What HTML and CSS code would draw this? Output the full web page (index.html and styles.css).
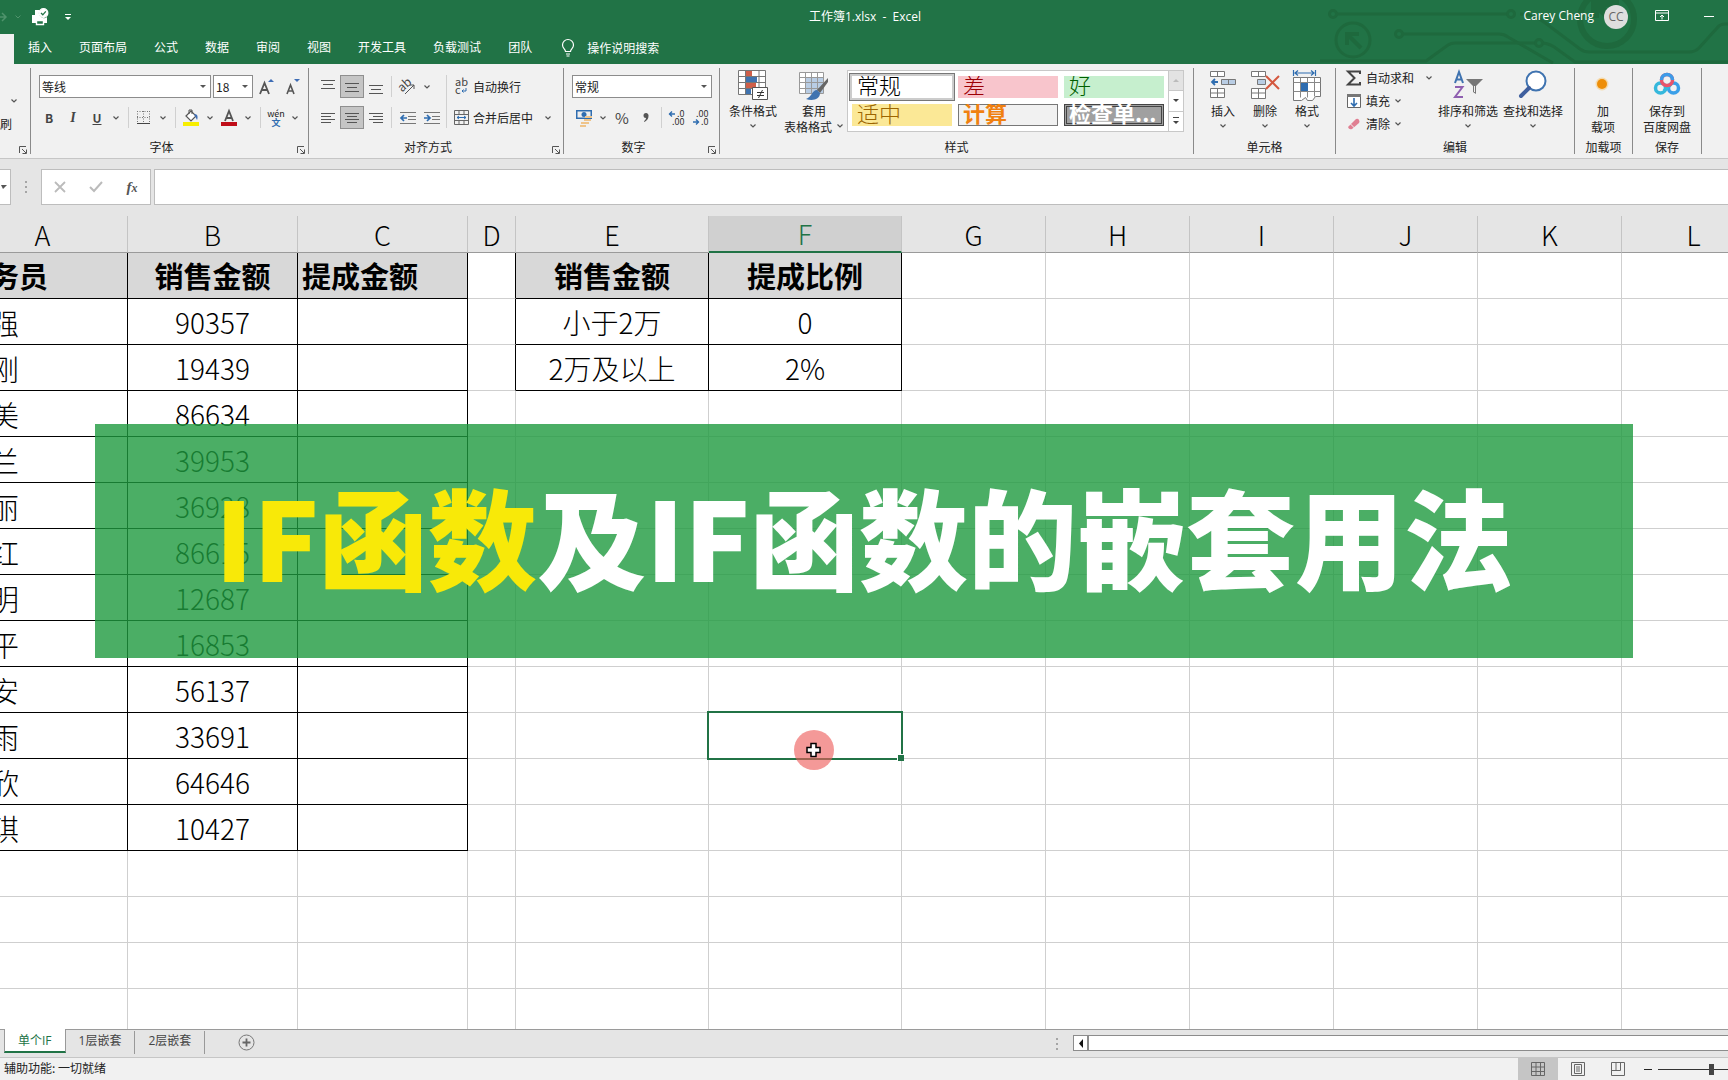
FILE: index.html
```html
<!DOCTYPE html>
<html lang="zh-CN">
<head>
<meta charset="utf-8">
<title>工作簿1.xlsx - Excel</title>
<link rel="stylesheet" href="styles.css">
</head>
<body>
<svg class="defs" aria-hidden="true">
  <symbol id="chev" viewBox="0 0 8 8"><path d="M1.500 2.500l2.500 2.500 2.500-2.500" fill="none" stroke="#555" stroke-width="1.200"/></symbol>
  <symbol id="launch" viewBox="0 0 8 8"><path d="M.5 7V.5H7M3 3l4 4M7.500 3.500v4h-4" fill="none" stroke="#555"/></symbol>
</svg>

<header class="top">
  <svg class="circuit" viewBox="0 0 408 64" aria-hidden="true">
    <g fill="none" stroke="#1e693d" stroke-width="3">
      <circle cx="13" cy="14" r="3.500"/><path d="M17 14h171"/><circle cx="191" cy="14" r="3.500"/>
      <circle cx="33" cy="40" r="17"/><path d="M41 48L28 35M27 45V34h12" stroke-width="4"/>
      <circle cx="79" cy="34" r="3.500"/><path d="M83 34h96q5 0 9 3l45 26"/>
      <path d="M-2 61h108l22-16q3-2 7-2h80"/><circle cx="219" cy="43" r="3.500"/><path d="M223 43q8 1 14 6l18 13h153"/>
      <path d="M200 14q14 0 24 8l36 27q4 3 9 3h100q6 0 10-4l18-20q3-4 8-4h10"/>
      <circle cx="287" cy="19" r="27" stroke-width="6"/><path d="M275 18V3h24M277 5l14 13" stroke-width="8"/>
    </g>
  </svg>
  <div class="titlebar">
    <div class="qat">
      <button class="ghost w7" aria-label="重做"><svg width="7" height="12"><path d="M0 6h6M2 2l4 4-4 4" fill="none" stroke="#4f936c" stroke-width="1.500"/></svg></button>
      <button class="ghost w22" aria-label="重做选项"><svg width="8" height="8"><path d="M1.500 2.500L4 5l2.500-2.500" fill="none" stroke="#4f936c"/></svg></button>
      <button class="ghost w24" aria-label="打印预览"><svg width="18" height="18" viewBox="0 0 18 18"><path d="M1 7h3V2h5a5 5 0 0 0 7 7v6h-3v-3H5v3H1z" fill="#fff"/><path d="M5.500 12.500h7v4h-7z" fill="#217346" stroke="#fff" stroke-width="1.400"/><circle cx="12.500" cy="5" r="4.300" fill="#fff" stroke="#fff" stroke-width="1.300"/><path d="M10 5l1.800 1.800 3-3.500" fill="none" stroke="#217346" stroke-width="1.300"/></svg></button>
      <button class="ghost w32" aria-label="自定义快速访问工具栏"><svg width="8" height="8"><path d="M1 1.500h6" stroke="#fff"/><path d="M1 4h6L4 7z" fill="#fff"/></svg></button>
    </div>
    <h1 class="doc">工作簿1.xlsx&nbsp; -&nbsp; Excel</h1>
    <div class="account">
      <span class="user">Carey Cheng</span>
      <span class="avatar">CC</span>
      <button class="ghost w14" aria-label="功能区显示选项"><svg width="14" height="12"><path d="M.5.5h13v10H.5zM.5 3h13M7 9.500V5M5 7l2-2 2 2" fill="none" stroke="#fff"/></svg></button>
      <button class="ghost w12" aria-label="最小化"><svg width="12" height="3"><path d="M1 1.500h10" stroke="#fff"/></svg></button>
    </div>
  </div>
  <nav class="tabs">
    <a class="tab current" href="#home" aria-label="开始"></a>
    <a class="tab" href="#insert">插入</a><a class="tab" href="#layout">页面布局</a><a class="tab" href="#formula">公式</a><a class="tab" href="#data">数据</a><a class="tab" href="#review">审阅</a><a class="tab" href="#view">视图</a><a class="tab" href="#dev">开发工具</a><a class="tab" href="#load">负载测试</a><a class="tab" href="#team">团队</a>
    <a class="tab tell" href="#tell"><svg width="14" height="18"><path d="M4.500 12.500c0-2.500-3-3-3-6.500a5.500 5.500 0 0 1 11 0c0 3.500-3 4-3 6.500zM5 15h4M5.500 17h3" fill="none" stroke="#fff" stroke-width="1.200"/></svg>操作说明搜索</a>
  </nav>
</header>

<section class="ribbon" aria-label="功能区">
  <div class="group g-clip">
    <div class="clip-body">
      <button class="chevbtn" aria-label="复制选项"><svg class="chev"><use href="#chev"/></svg></button>
      <button class="text-btn">刷</button>
    </div>
    <svg class="launch"><use href="#launch"/></svg>
  </div>

  <div class="group g-font">
    <div class="rows">
      <div class="row gap2">
        <span class="combo c172"><select aria-label="字体"><option>等线</option></select></span>
        <span class="combo c40"><select aria-label="字号"><option>18</option></select></span>
        <button class="b24" aria-label="增大字号"><svg width="20" height="20"><path d="M3 17L7.500 6l4.500 11M5 13h5" fill="none" stroke="#555" stroke-width="1.800"/><path d="M11 5h6l-3-3z" fill="#3e6db5"/></svg></button>
        <button class="b24" aria-label="减小字号"><svg width="20" height="20"><path d="M4 17L7.500 8l3.500 9M5.500 14h4" fill="none" stroke="#555" stroke-width="1.600"/><path d="M11 2h6l-3 3z" fill="#3e6db5"/></svg></button>
      </div>
      <div class="row">
        <button class="b24 bold">B</button><button class="b24 ital">I</button><button class="b24 under">U</button><button class="chevbtn" aria-label="下划线选项"><svg class="chev"><use href="#chev"/></svg></button>
        <i class="sep"></i>
        <button class="b24" aria-label="边框"><svg width="14" height="14"><path d="M.5 0v12M6.500 0v12M12.500 0v12M0 .5h13M0 6.500h13" stroke="#777" stroke-dasharray="1 1.500"/><path d="M0 12.500h13" stroke="#444"/></svg></button><button class="chevbtn" aria-label="边框选项"><svg class="chev"><use href="#chev"/></svg></button>
        <i class="sep"></i>
        <button class="b24" aria-label="填充颜色"><svg width="18" height="18"><path d="M4 7l5-5 5 5-5 5z" fill="#fff" stroke="#555" stroke-width="1.200"/><path d="M7 5V1h3v4" fill="none" stroke="#555"/><path d="M12 5c4 0 4 3 3 6l-2-4z" fill="#3e6db5"/><path d="M1 13h16v4H1z" fill="#f7ee00"/></svg></button><button class="chevbtn" aria-label="填充颜色选项"><svg class="chev"><use href="#chev"/></svg></button>
        <button class="b24" aria-label="字体颜色"><svg width="18" height="18"><path d="M5 12L9 2l4 10M6.500 9h5" fill="none" stroke="#555" stroke-width="1.800"/><path d="M1 13h16v4H1z" fill="#c00d18"/></svg></button><button class="chevbtn" aria-label="字体颜色选项"><svg class="chev"><use href="#chev"/></svg></button>
        <i class="sep"></i>
        <button class="b24 wen"><span>wén</span><span class="zh">文</span></button><button class="chevbtn" aria-label="拼音选项"><svg class="chev"><use href="#chev"/></svg></button>
      </div>
    </div>
    <div class="caption side">字体</div>
    <svg class="launch"><use href="#launch"/></svg>
  </div>

  <div class="group g-align">
    <div class="split">
      <div class="rows">
        <div class="row">
          <button class="b24" aria-label="顶端对齐"><svg width="14" height="14"><path d="M0 .5h14M2 4.500h10M0 8.500h14" stroke="#555"/></svg></button><button class="b24 on" aria-label="垂直居中"><svg width="14" height="14"><path d="M0 3.500h14M2 7.500h10M0 11.500h14" stroke="#555"/></svg></button><button class="b24" aria-label="底端对齐"><svg width="14" height="14"><path d="M0 5.500h14M2 9.500h10M0 13.500h14" stroke="#555"/></svg></button>
          <i class="sep s1"></i>
          <button class="b24" aria-label="方向"><svg width="18" height="18"><text x="0" y="11" transform="rotate(-42 6 9)" font-size="12" fill="#444">ab</text><path d="M6 16L15 7M11 7h4v4" fill="none" stroke="#555"/></svg></button><button class="chevbtn" aria-label="方向选项"><svg class="chev"><use href="#chev"/></svg></button>
        </div>
        <div class="row">
          <button class="b24" aria-label="左对齐"><svg width="14" height="14"><path d="M0 2.500h14M0 5.500h10M0 8.500h14M0 11.500h10" stroke="#555"/></svg></button><button class="b24 on" aria-label="居中"><svg width="14" height="14"><path d="M0 2.500h14M2 5.500h10M0 8.500h14M2 11.500h10" stroke="#555"/></svg></button><button class="b24" aria-label="右对齐"><svg width="14" height="14"><path d="M0 2.500h14M4 5.500h10M0 8.500h14M4 11.500h10" stroke="#555"/></svg></button>
          <i class="sep s1"></i>
          <button class="b24" aria-label="减少缩进"><svg width="16" height="14"><path d="M0 1.500h16M8 5.500h8M8 8.500h8M0 12.500h16" stroke="#777"/><path d="M7 7H1M4 4L1 7l3 3" fill="none" stroke="#2f6db0" stroke-width="1.700"/></svg></button><button class="b24" aria-label="增加缩进"><svg width="16" height="14"><path d="M0 1.500h16M8 5.500h8M8 8.500h8M0 12.500h16" stroke="#777"/><path d="M0 7h6M3 4l3 3-3 3" fill="none" stroke="#2f6db0" stroke-width="1.700"/></svg></button>
        </div>
      </div>
      <i class="sep tall"></i>
      <div class="rows">
        <button class="row label-btn"><svg width="15" height="16"><text x="1" y="7" font-size="11" fill="#444">ab</text><text x="1" y="15" font-size="11" fill="#444">c</text><path d="M12 9v3H8M9.500 10.500L8 12l1.500 1.500" fill="none" stroke="#2f6db0"/></svg>自动换行</button>
        <button class="row label-btn"><svg width="15" height="15"><path d="M.5.5h14v14H.5zM.5 4.500h14M.5 10.500h14M5 .5v4M10 .5v4M5 10.500v4M10 10.500v4" fill="none" stroke="#666"/><path d="M3 7.500h9M5 6L3 7.500 5 9M10 6l2 1.500L10 9" fill="none" stroke="#2f6db0"/></svg>合并后居中<svg class="chev ml"><use href="#chev"/></svg></button>
      </div>
    </div>
    <div class="caption side">对齐方式</div>
    <svg class="launch"><use href="#launch"/></svg>
  </div>

  <div class="group g-num">
    <div class="rows">
      <div class="row"><span class="combo c140"><select aria-label="数字格式"><option>常规</option></select></span></div>
      <div class="row">
        <button class="b24" aria-label="会计数字格式"><svg width="18" height="18"><path d="M1 1h16v9H1z" fill="#2f6db0"/><path d="M2.500 2.500h13v6h-13z" fill="#eee"/><circle cx="9" cy="5.500" r="2.500" fill="#2f6db0"/><path d="M10 8h7M9 11h7M6 14h8M5 17h6" stroke="#efc48a" stroke-width="2"/></svg></button><button class="chevbtn" aria-label="会计格式选项"><svg class="chev"><use href="#chev"/></svg></button>
        <button class="b24 pct">%</button><button class="b24" aria-label="千位分隔样式"><svg width="6" height="10"><path d="M3 0a2.500 2.500 0 0 1 2.500 3c0 3-1.500 4.500-4 6l-.5-.8C2.500 7 3 6 3 5A2.500 2.500 0 0 1 3 0z" fill="#555"/></svg></button>
        <i class="sep s2"></i>
        <button class="b24" aria-label="增加小数位数"><svg width="18" height="16"><text x="9" y="7" font-size="9" fill="#333">.0</text><text x="4" y="15" font-size="9" fill="#333">.00</text><path d="M7 4H1M4 1.500L1.500 4 4 6.500" fill="none" stroke="#2f6db0" stroke-width="1.400"/></svg></button><button class="b24" aria-label="减少小数位数"><svg width="18" height="16"><text x="4" y="7" font-size="9" fill="#333">.00</text><text x="9" y="15" font-size="9" fill="#333">.0</text><path d="M1 12h6M4 9.500L6.500 12 4 14.500" fill="none" stroke="#2f6db0" stroke-width="1.400"/></svg></button>
      </div>
    </div>
    <div class="caption side">数字</div>
    <svg class="launch"><use href="#launch"/></svg>
  </div>

  <div class="group g-style">
    <div class="bigs">
      <button class="big w62"><svg width="30" height="32"><path d="M.5.5h27v24H.5z" fill="#fff"/><path d="M8 0h6v6H8zM8 13h10v6H8z" fill="#cf5f4a"/><path d="M8 6h11v6H8zM8 19h5v5H8z" fill="#3f73b0"/><path d="M.5.5h27v24H.5zM7.500.5v24M21 .5v24M.5 6.500h27M.5 12.500h27M.5 18.500h27" fill="none" stroke="#777"/><path d="M14.500 17.500h15v12h-15z" fill="#fff" stroke="#555"/><path d="M19 22.500h7M19 25.500h7M24.500 20l-4 8" stroke="#333"/></svg><span>条件格式</span><svg class="chev"><use href="#chev"/></svg></button>
      <button class="big w60"><svg width="32" height="32"><path d="M1.500 2.500h24v21h-24z" fill="#fff"/><path d="M8 8h17v16H8z" fill="#b9cde4"/><path d="M1.500 2.500h24v21h-24zM7.500 2.500v21M13.500 2.500v21M19.500 2.500v21M1.500 7.500h24M1.500 12.500h24M1.500 18.500h24" fill="none" stroke="#999"/><path d="M30 8L19 20l3 3 8-11z" fill="#666"/><path d="M19 20c-5 0-5 7-11 9 6 2 14 1 14-6z" fill="#3f73b0"/></svg><span>套用</span><span class="inline">表格格式<svg class="chev"><use href="#chev"/></svg></span></button>
    </div>
    <div class="gallery">
      <div class="swatches">
        <button class="sw normal">常规</button><button class="sw bad">差</button><button class="sw good">好</button>
        <button class="sw neutral">适中</button><button class="sw calc">计算</button><button class="sw check">检查单...</button>
      </div>
      <div class="scroller">
        <button class="off" aria-label="上一行"><svg width="8" height="5"><path d="M1 4h6L4 1z" fill="#bbb"/></svg></button>
        <button aria-label="下一行"><svg width="8" height="5"><path d="M1 1h6L4 4z" fill="#444"/></svg></button>
        <button aria-label="其他"><svg width="8" height="8"><path d="M1 .5h6" stroke="#444"/><path d="M1 4h6L4 7z" fill="#444"/></svg></button>
      </div>
    </div>
    <div class="caption">样式</div>
  </div>

  <div class="group g-cells">
    <div class="bigs">
      <button class="big w42"><svg width="28" height="32"><path d="M1.500 1.500h14v5h-14zM8.500 1.500v5M1.500 18.500h14v9h-14zM8.500 18.500v9M1.500 23h14" fill="#fff" stroke="#777"/><path d="M12.500 9.500h14v5h-14zM19.500 9.500v5" fill="#b9cde4" stroke="#777"/><path d="M9 12H3M6 9l-3 3 3 3" fill="none" stroke="#2f6db0" stroke-width="1.800"/></svg><span>插入</span><svg class="chev"><use href="#chev"/></svg></button>
      <button class="big w42"><svg width="30" height="32"><path d="M1.500 1.500h14v5h-14zM8.500 1.500v5M1.500 18.500h14v10h-14zM8.500 18.500v10M1.500 23h14" fill="#fff" stroke="#777"/><path d="M7.500 9.500h8v5h-8z" fill="#b9cde4" stroke="#777"/><path d="M16 6l13 13M29 6L16 19" stroke="#d4583f" stroke-width="2"/></svg><span>删除</span><svg class="chev"><use href="#chev"/></svg></button>
      <button class="big w42"><svg width="28" height="32"><path d="M.5 0v6M22.500 0v6M2 3h19M5 .5L2 3l3 2.500M18 .5L21 3l-3 2.500" fill="none" stroke="#2f6db0" stroke-width="1.200"/><path d="M.5 7.500h27v19h-5l-3 4h-5l-2-3-4 3h-8z" fill="#fff" stroke="#777"/><path d="M7.500 7.500v20M14.500 7.500v20M21.500 7.500v19M.5 12.500h27M.5 21.500h27" stroke="#888"/><path d="M8 13h7v8H8z" fill="#2f6db0"/></svg><span>格式</span><svg class="chev"><use href="#chev"/></svg></button>
    </div>
    <div class="caption">单元格</div>
  </div>

  <div class="group g-edit">
    <div class="edits">
      <button class="edit"><svg width="16" height="16"><path d="M14 4V1.500H2L8.500 8 2 14.500h12V12" fill="none" stroke="#444" stroke-width="2"/></svg>自动求和<svg class="chev ml"><use href="#chev"/></svg></button>
      <button class="edit"><svg width="16" height="16"><path d="M1.500 1.500h13v13h-13z" fill="#fff" stroke="#666"/><path d="M1 1h14v3H1z" fill="#777"/><path d="M8 5v8M5 10l3 3 3-3" fill="none" stroke="#2f6db0" stroke-width="1.600"/></svg>填充<svg class="chev"><use href="#chev"/></svg></button>
      <button class="edit"><svg width="16" height="16"><path d="M2 11L10 3q2-1 3 1t0 3L6 13q-3 1-4-2z" fill="#e07f92"/><path d="M4.500 8l4 4" stroke="#f1f1f1"/></svg>清除<svg class="chev"><use href="#chev"/></svg></button>
    </div>
    <div class="bigs">
      <button class="big w66"><svg width="32" height="32"><path d="M3 13L7 2l4 11M4.500 9.500h5" fill="none" stroke="#3f73b0" stroke-width="2"/><path d="M3 17h7.500L3 27h8" fill="none" stroke="#8f5fb0" stroke-width="2"/><path d="M14 9h17l-7 7v8l-3-2v-6z" fill="#777"/><path d="M22 16h1v6h-1z" fill="#f1f1f1"/></svg><span>排序和筛选</span><svg class="chev"><use href="#chev"/></svg></button>
      <button class="big w64"><svg width="30" height="32"><circle cx="18" cy="11" r="9.500" fill="#fff" stroke="#3f73b0" stroke-width="2"/><path d="M11 18L3 26" stroke="#3f5f9e" stroke-width="4" stroke-linecap="round"/></svg><span>查找和选择</span><svg class="chev"><use href="#chev"/></svg></button>
    </div>
    <div class="caption">编辑</div>
  </div>

  <div class="group g-addin">
    <div class="bigs"><button class="big w56"><svg width="28" height="32"><circle cx="13" cy="14" r="6.500" fill="#f9c56b" opacity=".5"/><circle cx="13" cy="14" r="5" fill="#ee8e08"/></svg><span>加</span><span>载项</span></button></div>
    <div class="caption">加载项</div>
  </div>
  <div class="group g-save">
    <div class="bigs"><button class="big w68"><svg width="28" height="32"><g fill="none" stroke-width="3.500"><circle cx="7.500" cy="18" r="5" stroke="#35b8dc"/><circle cx="20.500" cy="18" r="5" stroke="#3a9fe8"/><path d="M11 21l7-7" stroke="#35b8dc"/><circle cx="14" cy="10" r="5.500" stroke="#e9546b"/><path d="M8.500 10a5.500 5.500 0 0 1 11 0" stroke="#3d9be8"/></g></svg><span>保存到</span><span>百度网盘</span></button></div>
    <div class="caption">保存</div>
  </div>
</section>

<div class="formula">
  <button class="namebox" aria-label="名称框"><svg width="8" height="5"><path d="M0 0h6L2 4z" fill="#555"/></svg></button>
  <span class="grip"></span>
  <div class="fx">
    <button aria-label="取消"><svg width="12" height="12"><path d="M1 1l10 10M11 1L1 11" stroke="#bbb" stroke-width="1.800"/></svg></button>
    <button aria-label="输入"><svg width="14" height="12"><path d="M1 6l4 4 8-9" fill="none" stroke="#bbb" stroke-width="2"/></svg></button>
    <button class="fxi">f<small>x</small></button>
  </div>
  <input class="finput" aria-label="编辑栏">
</div>

<main class="sheet">
  <table class="grid">
    <colgroup><col class="k170"><col class="k170"><col class="k170"><col class="k48"><col class="k193"><col class="k193"><col class="k144"><col class="k144"><col class="k144"><col class="k144"><col class="k144"><col class="k144"></colgroup>
    <thead><tr><th>A</th><th>B</th><th>C</th><th>D</th><th>E</th><th class="sel">F</th><th>G</th><th>H</th><th>I</th><th>J</th><th>K</th><th>L</th></tr></thead>
    <tbody>
      <tr><td class="h n">务员</td><td class="h">销售金额</td><td class="h l">提成金额</td><td class="r"></td><td class="h">销售金额</td><td class="h">提成比例</td><td></td><td></td><td></td><td></td><td></td><td></td></tr>
      <tr><td class="d n">强</td><td class="d">90357</td><td class="d"></td><td class="r"></td><td class="d">小于2万</td><td class="d">0</td><td></td><td></td><td></td><td></td><td></td><td></td></tr>
      <tr><td class="d n">刚</td><td class="d">19439</td><td class="d"></td><td class="r"></td><td class="d">2万及以上</td><td class="d">2%</td><td></td><td></td><td></td><td></td><td></td><td></td></tr>
      <tr><td class="d n">美</td><td class="d">86634</td><td class="d"></td><td></td><td></td><td></td><td></td><td></td><td></td><td></td><td></td><td></td></tr>
      <tr><td class="d n">兰</td><td class="d">39953</td><td class="d"></td><td></td><td></td><td></td><td></td><td></td><td></td><td></td><td></td><td></td></tr>
      <tr><td class="d n">丽</td><td class="d">36928</td><td class="d"></td><td></td><td></td><td></td><td></td><td></td><td></td><td></td><td></td><td></td></tr>
      <tr><td class="d n">红</td><td class="d">86615</td><td class="d"></td><td></td><td></td><td></td><td></td><td></td><td></td><td></td><td></td><td></td></tr>
      <tr><td class="d n">明</td><td class="d">12687</td><td class="d"></td><td></td><td></td><td></td><td></td><td></td><td></td><td></td><td></td><td></td></tr>
      <tr><td class="d n">平</td><td class="d">16853</td><td class="d"></td><td></td><td></td><td></td><td></td><td></td><td></td><td></td><td></td><td></td></tr>
      <tr><td class="d n">安</td><td class="d">56137</td><td class="d"></td><td></td><td></td><td></td><td></td><td></td><td></td><td></td><td></td><td></td></tr>
      <tr><td class="d n">雨</td><td class="d">33691</td><td class="d"></td><td></td><td></td><td class="active"><span class="halo"><svg width="16" height="16"><path d="M5 1.500h5v4h4v5h-4v4H5v-4H1v-5h4z" fill="#fff" stroke="#000" stroke-width="1.500"/></svg></span></td><td></td><td></td><td></td><td></td><td></td><td></td></tr>
      <tr><td class="d n">欣</td><td class="d">64646</td><td class="d"></td><td></td><td></td><td></td><td></td><td></td><td></td><td></td><td></td><td></td></tr>
      <tr><td class="d n">琪</td><td class="d">10427</td><td class="d"></td><td></td><td></td><td></td><td></td><td></td><td></td><td></td><td></td><td></td></tr>
      <tr><td></td><td></td><td></td><td></td><td></td><td></td><td></td><td></td><td></td><td></td><td></td><td></td></tr>
      <tr><td></td><td></td><td></td><td></td><td></td><td></td><td></td><td></td><td></td><td></td><td></td><td></td></tr>
      <tr><td></td><td></td><td></td><td></td><td></td><td></td><td></td><td></td><td></td><td></td><td></td><td></td></tr>
      <tr><td></td><td></td><td></td><td></td><td></td><td></td><td></td><td></td><td></td><td></td><td></td><td></td></tr>
    </tbody>
  </table>
  <div class="banner"><p><em>IF函数</em>及IF函数的嵌套用法</p></div>
</main>

<div class="sheetbar">
  <div class="sheettabs">
    <a class="stab now" href="#s1">单个IF</a><a class="stab" href="#s2">1层嵌套</a><a class="stab" href="#s3">2层嵌套</a>
    <button class="add" aria-label="新工作表"><svg width="17" height="17"><circle cx="8.500" cy="8.500" r="7.500" fill="none" stroke="#777"/><path d="M8.500 4.500v8M4.500 8.500h8" stroke="#666" stroke-width="1.800"/></svg></button>
  </div>
  <span class="grip small"></span>
  <div class="hscroll"><button aria-label="向左滚动"><svg width="6" height="9"><path d="M5 0v9L1 4.500z" fill="#111"/></svg></button></div>
</div>

<footer class="status">
  <span class="access">辅助功能: 一切就绪</span>
  <div class="views">
    <button class="on" aria-label="普通"><svg width="14" height="14"><path d="M.5.500h13v13H.5zM5 .5v13M9.500 .5v13M.5 5h13M.5 9.500h13" fill="none" stroke="#666"/></svg></button>
    <button aria-label="页面布局"><svg width="14" height="14"><path d="M.5.5h13v13H.5zM3.500 2.500h7v9h-7zM5 5h4M5 7h4M5 9h4" fill="none" stroke="#666"/></svg></button>
    <button aria-label="分页预览"><svg width="14" height="14"><path d="M.5.5h13v13H.5zM.5 8.500h9v-8M5 .5v8" fill="none" stroke="#666"/></svg></button>
    <button class="minus" aria-label="缩小"><svg width="8" height="1"><path d="M0 .5h8" stroke="#222"/></svg></button>
    <input class="zoom" type="range" min="10" max="400" value="205" aria-label="缩放">
  </div>
</footer>
</body>
</html>
```
FILE: styles.css
```css
* { box-sizing: border-box; }
body {
  margin: 0;
  height: 100vh;
  display: flex;
  flex-direction: column;
  overflow: hidden;
  background: #e5e5e5;
  color: #222;
  font: 12px/16px "Noto Sans CJK SC", sans-serif;
}
button, select, input { font: inherit; color: inherit; }
button { border: 0; padding: 0; background: none; display: flex; align-items: center; justify-content: center; flex: none; }
a { color: inherit; text-decoration: none; }
svg { display: block; flex: none; overflow: visible; }
.defs { width: 0; height: 0; position: absolute; }
.chev { width: 8px; height: 8px; }

/* title bar and tabs */
.top { position: relative; background: #217346; color: #fff; flex: none; }
.circuit { position: absolute; right: 0; top: 0; width: 408px; height: 64px; overflow: hidden; }
.titlebar { position: relative; display: grid; grid-template-columns: 1fr auto 1fr; height: 34px; }
.qat { display: flex; align-items: center; }
.doc { margin: 0; font: 400 12px/34px "Open Sans", "Noto Sans CJK SC", sans-serif; padding-left: 2px; }
.account { display: flex; justify-content: flex-end; align-items: center; padding: 0 13px 2px 0; }
.user { font-family: "Open Sans", sans-serif; font-size: 12px; }
.avatar { width: 24px; height: 24px; margin: 2px 27px 0 10px; border-radius: 50%; background: #dedede; color: #666; font: 12px/24px "Open Sans", sans-serif; text-align: center; }
.w7 { width: 7px; }
.w22 { width: 21px; }
.w24 { width: 24px; }
.w32 { width: 32px; }
.w14 { width: 14px; margin-right: 34px; }
.w12 { width: 12px; }
.tabs { position: relative; display: flex; height: 30px; }
.tab { padding: 0 13px 0 14px; line-height: 26px; }
.tab.current { width: 14px; padding: 0; background: #f1f1f1; }
.tell { display: flex; align-items: center; gap: 12px; padding-left: 16px; padding-bottom: 2px; }

/* ribbon */
.ribbon { display: flex; height: 95px; flex: none; padding: 4px 0; background: #f1f1f1; border-bottom: 1px solid #c6c6c6; }
.group { position: relative; flex: none; display: flex; flex-wrap: wrap; align-content: space-between; border-right: 1px solid #8a8a8a; }
.caption { width: 100%; text-align: center; line-height: 14px; }
.side { padding-right: 16px; }
.launch { position: absolute; right: 3px; bottom: 0; width: 8px; height: 8px; }
.g-clip { width: 31px; }
.g-font { width: 278px; }
.g-align { width: 255px; }
.g-num { width: 156px; }
.g-style { width: 474px; }
.g-cells { width: 142px; }
.g-edit { width: 239px; }
.g-addin { width: 58px; }
.g-save { width: 69px; }
.clip-body { padding-top: 21px; }
.clip-body .chevbtn { margin: 0 0 4px 7px; }
.rows { display: flex; flex-direction: column; gap: 8px; padding: 7px 0 0 7px; }
.g-font .rows { padding-left: 8px; }
.g-font .row:last-child { margin-left: -2px; }
.row { display: flex; align-items: center; height: 23px; }
.gap2 { gap: 2px; }
.split { display: flex; }
.combo { position: relative; display: flex; height: 23px; border: 1px solid #8c8c8c; background: #fff; }
.combo::after { content: ""; position: absolute; right: 4px; top: 9px; border: 3px solid transparent; border-top-color: #555; border-bottom: 0; }
.combo select { flex: 1; min-width: 0; border: 0; padding: 0 2px; background: transparent; appearance: none; outline: 0; }
.c172 { width: 172px; }
.c40 { width: 40px; }
.c140 { width: 140px; }
.b24 { width: 24px; height: 23px; }
.chevbtn { width: 14px; height: 23px; }
.on { background: #c5c5c5; border: 1px solid #8f8f8f; }
.bold { font-weight: 700; color: #444; }
.ital { font: italic 700 14px "Liberation Serif", serif; color: #444; }
.under { font-weight: 700; text-decoration: underline; color: #444; }
.wen { flex-direction: column; font-size: 9px; line-height: 9px; }
.zh { color: #2f6db0; font-weight: 700; }
.sep { width: 1px; height: 21px; margin: 0 3px 0 5px; background: #d0d0d0; }
.s1 { margin: 0 4px 0 3px; }
.s2 { margin: 0 3px; }
.tall { height: 53px; margin: 7px 0 0 2px; }
.label-btn { gap: 4px; justify-content: flex-start; }
.label-btn .ml { margin-left: 7px; }
.pct { font-size: 15px; color: #444; }
.g-num .rows { padding-left: 8px; }

.bigs { display: flex; padding-top: 2px; }
.big { flex-direction: column; height: 64px; justify-content: flex-start; white-space: nowrap; line-height: 16px; }
.big > svg:first-child { margin-bottom: 1px; }
.big .chev { margin-top: 3px; }
.inline { display: flex; gap: 4px; }
.w62 { width: 62px; }
.w64 { width: 64px; }
.w60 { width: 60px; }
.w42 { width: 42px; }
.w66 { width: 66px; }
.w56 { width: 56px; }
.w68 { width: 68px; }
.g-style .bigs { padding-left: 2px; }
.gallery { display: flex; height: 62px; margin: 2px 9px 0 auto; border: 1px solid #c8c8c8; background: #fff; }
.swatches { display: grid; grid-template-columns: repeat(3, 100px); grid-auto-rows: 22px; gap: 6px; padding: 5px 4px; }
.sw { justify-content: flex-start; align-items: flex-start; height: 22px; overflow: hidden; padding-left: 5px; font-size: 22px; line-height: 16px; font-weight: 300; white-space: nowrap; }
.normal { outline: 1px solid #777; outline-offset: 2px; box-shadow: 0 0 0 2px #ccc; color: #000; }
.bad { background: #f8c5cc; color: #9c0006; }
.good { background: #c6efce; color: #006100; }
.neutral { background: #fbe896; color: #9c6500; }
.calc { box-shadow: inset 0 0 0 1px #777; background: #f1f1f1; color: #f08010; font-weight: 700; }
.check { box-shadow: inset 0 0 0 1px #444, inset 0 0 0 2px #a0a0a0, inset 0 0 0 3px #444; background: #a0a0a0; color: #fff; font-weight: 700; }
.scroller { display: flex; flex-direction: column; width: 15px; border-left: 1px solid #c8c8c8; }
.scroller button { flex: 1; border-bottom: 1px solid #c8c8c8; }
.scroller button:last-child { border-bottom: 0; }
.scroller .off { background: #e3e3e3; }
.g-cells .bigs { padding-left: 8px; }
.edits { display: flex; flex-direction: column; gap: 7px; padding: 2px 0 0 10px; width: 99px; }
.edit { gap: 4px; height: 16px; justify-content: flex-start; }
.edit .ml { margin-left: 7px; }

/* formula bar */
.formula { display: flex; flex: none; height: 57px; padding: 10px 0 11px; }
.namebox { width: 11px; border: 1px solid #bdbdbd; border-left: 0; background: #fff; }
.grip { width: 2px; height: 12px; margin: 12px 14px; background: repeating-linear-gradient(#a5a5a5 0 2px, transparent 2px 5px); }
.fx { display: flex; width: 110px; border: 1px solid #bdbdbd; background: #fff; }
.fx button { flex: 1; }
.fx .fxi { font: italic 700 15px "Liberation Serif", serif; color: #555; }
.fxi small { font-size: 12px; padding-top: 3px; }
.finput { flex: 1; min-width: 0; margin-left: 3px; border: 1px solid #bdbdbd; border-right: 0; background: #fff; outline: 0; }

/* worksheet */
.sheet { position: relative; flex: 1; min-height: 0; overflow: hidden; background: #fff; }
.grid { table-layout: fixed; width: 1808px; margin-left: -42px; border-collapse: separate; border-spacing: 0; font-size: 28px; line-height: 44px; font-weight: 300; color: #000; }
.k170 { width: 170px; }
.k48 { width: 48px; }
.k193 { width: 193px; }
.k144 { width: 144px; }
.grid th { height: 37px; padding: 2px 0 0; font-size: 27px; font-weight: 300; line-height: 32px; background: #e5e5e5; border-right: 1px solid #c4c4c4; border-bottom: 1px solid #9a9a9a; }
.grid .sel { padding: 1px 0 0; background: #d0d0d0; color: #217346; border-bottom: 2px solid #217346; }
.grid td { height: 46px; padding: 0; text-align: center; white-space: nowrap; border-right: 1px solid #cfcfcf; border-bottom: 1px solid #cfcfcf; }
.grid .d, .grid .h { border-color: #000; }
.grid .h { background: #d8d8d8; font-size: 29px; line-height: 42px; padding-bottom: 2px; font-weight: 700; }
.grid .r { border-right-color: #000; }
.grid .n { padding-left: 32px; text-align: left; font-size: 29px; }
.grid .l { padding-left: 4px; text-align: left; }
.active { position: relative; }
.active::before { content: ""; position: absolute; inset: -2px; border: 2px solid #217346; }
.active::after { content: ""; position: absolute; right: -3px; bottom: -3px; width: 6px; height: 6px; background: #217346; border: 1px solid #fff; border-width: 1px 0 0 1px; }
.halo { position: absolute; left: 85px; top: 17px; z-index: 1; width: 40px; height: 40px; display: flex; align-items: center; justify-content: center; border-radius: 50%; background: rgba(238, 90, 88, .62); }
.banner { position: absolute; z-index: 2; left: 95px; right: 95px; top: 208px; height: 234px; display: flex; align-items: center; justify-content: center; padding-bottom: 12px; background: rgba(30, 154, 62, .8); }
.banner p { margin: 0; font-size: 109px; line-height: 160px; font-weight: 900; color: #fff; white-space: nowrap; }
.banner em { font-style: normal; color: #f8e908; }

/* sheet tabs */
.sheetbar { display: flex; flex: none; height: 29px; border-top: 1px solid #9a9a9a; border-bottom: 1px solid #c6c6c6; background: #e5e5e5; font-family: "Open Sans", "Noto Sans CJK SC", sans-serif; }
.sheettabs { display: flex; flex: 1; padding-left: 4px; }
.stab { height: 23px; margin: 1px 0; padding: 0 13px; line-height: 20px; border-right: 1px solid #999; color: #444; }
.now { height: 24px; margin: -1px 0 0; line-height: 23px; background: #fff; color: #217346; border-left: 1px solid #999; border-bottom: 2px solid #217346; }
.add { width: 17px; height: 25px; margin-left: 33px; }
.small { margin: 8px 15px 0; }
.hscroll { flex: 0 0 655px; height: 16px; margin-top: 5px; border: 1px solid #8c8c8c; border-right: 0; background: #fff; display: flex; }
.hscroll button { width: 15px; border-right: 2px solid #8c8c8c; }

/* status bar */
.status { display: flex; justify-content: space-between; flex: none; height: 22px; background: #f1f1f1; overflow: hidden; }
.access { padding-left: 4px; line-height: 19px; }
.views { display: flex; margin-right: -36px; }
.views button { width: 40px; }
.views .on { border: 0; }
.views .minus { width: 20px; }
.zoom { width: 106px; margin: 0; appearance: none; background: linear-gradient(#333, #333) center / 100% 1px no-repeat; }
.zoom::-webkit-slider-thumb { appearance: none; width: 5px; height: 11px; background: #444; }
```
